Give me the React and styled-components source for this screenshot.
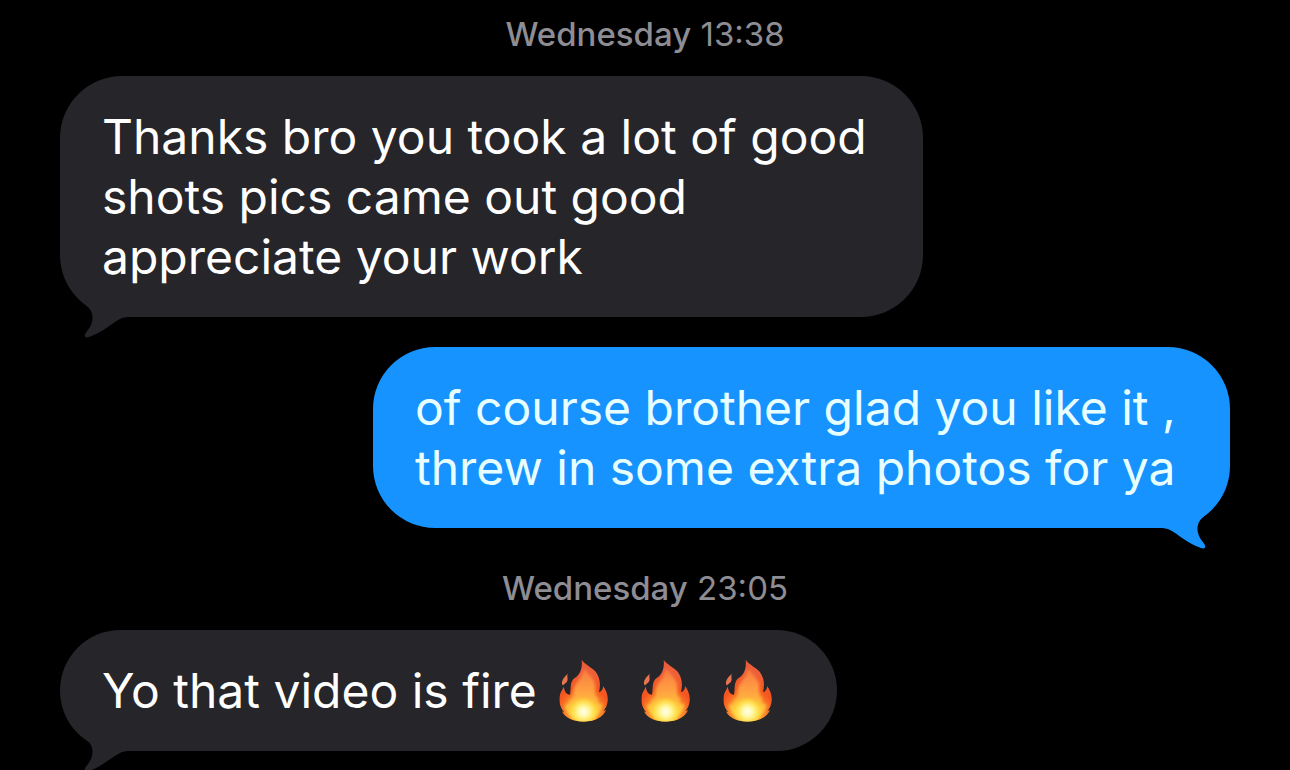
import React from 'react';
import styled, {createGlobalStyle} from "styled-components";

const GlobalStyle = createGlobalStyle`
    body {
        margin: 0;
        background: #000;
    }
`

const Thread = styled.main`
    box-sizing: border-box;
    height: 100vh;
    overflow: hidden;
    display: flex;
    flex-direction: column;
    padding: 14px 60px 0;
    background: #000;
    font-family: Inter, "Liberation Sans", sans-serif;
`

const Stamp = styled.time`
    align-self: center;
    margin: ${(props) => (props.$first ? "0 0 22px" : "40px 0 22px")};
    font-size: 33px;
    line-height: 40px;
    color: #8d8d93;
`

const Day = styled.span`
    font-weight: 500;
`

const Bubble = styled.div`
    position: relative;
    flex: none;
    box-sizing: border-box;
    align-self: ${(props) => (props.$sent ? "flex-end" : "flex-start")};
    max-width: ${(props) => (props.$sent ? "857px" : "863px")};
    margin-top: ${(props) => (props.$sent ? "30px" : "0")};
    padding: 31px 42px 30px;
    border-radius: 62px;
    background: ${(props) => (props.$sent ? "#1693ff" : "#26252a")};
    color: ${(props) => (props.$sent ? "#e8ffff" : "#fff")};
`

const Message = styled.p`
    margin: 0;
    font-size: 48px;
    line-height: 60px;
`

// Text followed by emoji, kept on one 60px line
const MessageRow = styled.div`
    display: flex;
    align-items: center;
    height: 60px;
    gap: 16px;
    padding-right: 12px;
`

const TailShape = styled.svg`
    position: absolute;
    bottom: -21px;
    ${(props) => (props.$sent ? "right: 0; transform: scaleX(-1);" : "left: 0;")}
    width: 76px;
    height: 60px;
    fill: ${(props) => (props.$sent ? "#1693ff" : "#26252a")};
`

const FlameIcon = styled.svg`
    flex: none;
    width: 66px;
    height: 64px;
`

const Tail = ({sent}) => (
    <TailShape $sent={sent} viewBox="0 0 76 60" aria-hidden="true">
        <path d="M17 19 L22 24 C29 29 32.500 33 32.500 40 C32.500 46 29 51 26 54.500 C23.500 58 25 60.500 29 59 C43 54 52 45 60 41 C63 39.500 66 39 71 39 L71 14 Z"/>
    </TailShape>
);

const Flame = ({id}) => (
    <FlameIcon viewBox="9 26 198 192" role="img" aria-label="fire">
        <defs>
            <radialGradient id={`${id}-outer`} gradientUnits="userSpaceOnUse" cx="100" cy="190" r="165">
                <stop offset="0" stopColor="#ffc23c"/>
                <stop offset="0.3" stopColor="#fb8a2c"/>
                <stop offset="0.5" stopColor="#f4551f"/>
                <stop offset="0.75" stopColor="#ee6039"/>
                <stop offset="1" stopColor="#e8583c"/>
            </radialGradient>
            <linearGradient id={`${id}-inner`} x1="0" y1="0" x2="0" y2="1">
                <stop offset="0" stopColor="#f87a42"/>
                <stop offset="0.4" stopColor="#ff9d42"/>
                <stop offset="0.7" stopColor="#ffbe3a"/>
                <stop offset="1" stopColor="#ffe24a"/>
            </linearGradient>
            <radialGradient id={`${id}-core`}>
                <stop offset="0" stopColor="#fffff0"/>
                <stop offset="0.35" stopColor="#fff7a0"/>
                <stop offset="0.7" stopColor="#ffe14a" stopOpacity="0.8"/>
                <stop offset="1" stopColor="#ffc83a" stopOpacity="0"/>
            </radialGradient>
            <filter id={`${id}-soft`}>
                <feGaussianBlur stdDeviation="4"/>
            </filter>
            <clipPath id={`${id}-clip`}>
                <path d="M95 28 C104 42 124 50 137 64 C149 80 153 100 147 126 C154 123 160 116 159 107 C168 118 175 136 173 152 C171 168 166 176 160 182 L168 179 C160 200 136 213 102 214 C68 214 44 202 36 183 L43 186 C30 172 26 154 29 138 C31 125 40 117 41 108 C43 122 48 133 60 133 C64 118 58 94 74 83 C90 73 98 54 95 28 Z"/>
            </clipPath>
        </defs>
        <path fill="#e8754f" d="M53 70 C47 76 38 84 36 94 C35 99 37 103 38 105 C43 101 50 97 52 91 C55 84 50 78 53 70 Z"/>
        <g clipPath={`url(#${id}-clip)`}>
            <path fill={`url(#${id}-outer)`} d="M0 0 H200 V220 H0 Z"/>
            <path
                fill={`url(#${id}-inner)`}
                filter={`url(#${id}-soft)`}
                d="M101 54 C112 70 134 84 136 108 C136 128 134 140 142 139 C146 154 142 164 157 160 C156 184 135 208 102 210 C66 208 47 188 44 162 C54 165 57 155 59 148 C70 146 72 134 71 120 C71 98 102 84 101 54 Z"
            />
            <ellipse cx="101" cy="184" rx="48" ry="46" fill={`url(#${id}-core)`}/>
        </g>
    </FlameIcon>
);

function App() {
    return (
        <>
            <GlobalStyle/>
            <Thread>
                <Stamp $first><Day>Wednesday</Day> 13:38</Stamp>
                <Bubble>
                    <Message>Thanks bro you took a lot of good shots pics came out good appreciate your work</Message>
                    <Tail/>
                </Bubble>
                <Bubble $sent>
                    <Message>of course brother glad you like it , threw in some extra photos for ya</Message>
                    <Tail sent/>
                </Bubble>
                <Stamp><Day>Wednesday</Day> 23:05</Stamp>
                <Bubble>
                    <MessageRow>
                        <Message>Yo that video is fire</Message>
                        {["flame-a", "flame-b", "flame-c"].map((id) => (
                            <Flame key={id} id={id}/>
                        ))}
                    </MessageRow>
                    <Tail/>
                </Bubble>
            </Thread>
        </>
    )
}

export default App;
